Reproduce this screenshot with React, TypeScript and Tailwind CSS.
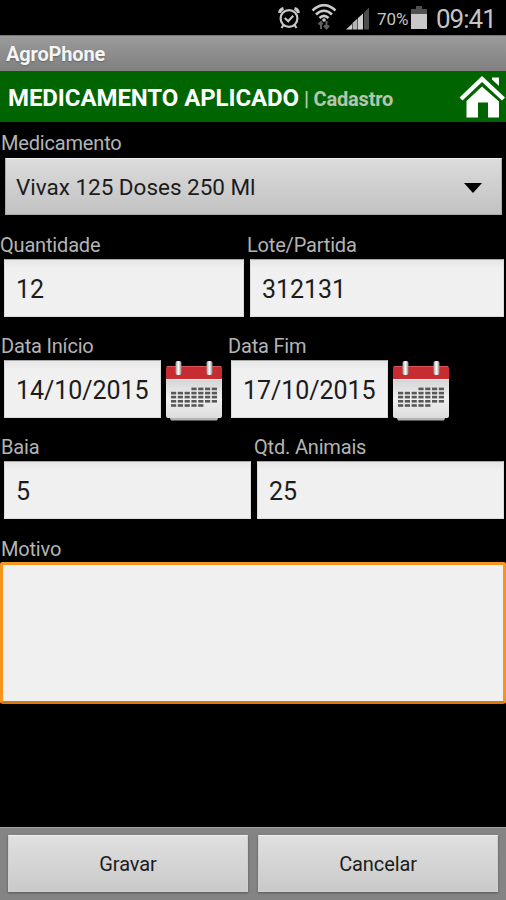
import React from "react";

function Label({ children, className = "" }: { children: React.ReactNode; className?: string }) {
  return (
    <div className={`whitespace-nowrap text-[20px] leading-6 tracking-[-0.18px] text-[#b4b4b4] ${className}`}>
      {children}
    </div>
  );
}

function Field({ value, className = "" }: { value: string; className?: string }) {
  return (
    <div
      className={`flex h-[58px] items-center whitespace-nowrap border border-[#dcdcdc] border-t-[#a8a8a8] bg-gradient-to-b from-[#e6e6e6] to-[#f0f0f0] to-15% pl-[11px] pt-1 text-[25px] tracking-[-0.05px] text-[#1c1c1c] ${className}`}
    >
      {value}
    </div>
  );
}

const calendarRows = [
  { y: 27.6, from: 3, to: 6 },
  { y: 31.8, from: 0, to: 6 },
  { y: 35.8, from: 0, to: 6 },
  { y: 40, from: 0, to: 6 },
  { y: 44.2, from: 0, to: 4 },
];

function Calendar() {
  return (
    <svg width="58" height="62" viewBox="0 0 58 62" className="block shrink-0">
      <defs>
        <linearGradient id="sheet" x1="0" y1="0" x2="0" y2="1">
          <stop offset="0" stopColor="#d2d2d5" />
          <stop offset="0.5" stopColor="#f0f0f0" />
          <stop offset="1" stopColor="#dddddd" />
        </linearGradient>
        <linearGradient id="ring" x1="0" y1="0" x2="1" y2="0">
          <stop offset="0" stopColor="#999" />
          <stop offset="0.5" stopColor="#fff" />
          <stop offset="1" stopColor="#888" />
        </linearGradient>
      </defs>
      <path d="M4 56h50l-2 4.500H6z" fill="#b4b4b4" />
      <path d="M1 18h56v38q0 2-2 2H3q-2 0-2-2z" fill="url(#sheet)" />
      <path d="M1 19V8q0-2 2-2h52q2 0 2 2v11z" fill="#c62c30" />
      <path d="M2 6.500h54" stroke="#d8585a" strokeWidth="1" />
      <path d="M1 19.500h56" stroke="#efefef" strokeWidth="1" />
      <rect x="10.5" y="1" width="6" height="14" rx="2" fill="url(#ring)" />
      <rect x="41.500" y="1" width="6" height="14" rx="2" fill="url(#ring)" />
      {calendarRows.map((row, r) =>
        [0, 1, 2, 3, 4, 5, 6]
          .filter((c) => c >= row.from && c <= row.to)
          .map((c) => (
            <rect key={`${r}-${c}`} x={6 + c * 6.8} y={row.y} width="5.2" height="2.6" fill="#585858" />
          )),
      )}
    </svg>
  );
}

function StatusBar() {
  return (
    <div className="flex h-[35px] items-start text-[#c4c4c4]">
      <svg width="24" height="24" viewBox="0 0 24 24" fill="none" stroke="#c8c8c8" className="ml-[277px] mt-1.5">
        <circle cx="12" cy="12.5" r="8.400" strokeWidth="2.200" />
        <path d="M7.800 12l3.400 3.200 5-5.400" strokeWidth="2.200" />
        <path d="M2.500 7Q3 3.500 6.500 2.500M21.500 7Q21 3.500 17.500 2.500" strokeWidth="3" />
        <path d="M6.500 19l-2 3M17.500 19l2 3" strokeWidth="2.200" />
      </svg>
      <svg width="26" height="28" viewBox="0 0 26 28" fill="none" className="ml-[10px] mt-1">
        <path d="M1.500 6.500Q13-4 24.500 6.500M5 10.500Q13 3 21 10.500M8.500 14Q13 9.500 17.500 14" stroke="#cacaca" strokeWidth="2.600" />
        <circle cx="13" cy="16" r="1.800" fill="#c4c4c4" />
        <path d="M10 25v-7M7.500 20.500L10 18l1.500 2.500M15.500 17v7M13 21.500l2.500 3 2.500-3" stroke="#606060" strokeWidth="2" />
      </svg>
      <svg width="24" height="24" viewBox="0 0 24 24" className="ml-[9px] mt-1.5">
        <path d="M0 23.500L6 18v5.500z" fill="#cfcfcf" />
        <path d="M6.500 23.500V17l5-4.500v11z" fill="#b4b4b4" />
        <path d="M12 23.500V12l5-4.500v16z" fill="#cfcfcf" />
        <path d="M18 23.500V6.500l5-5v22z" fill="#4d4d4d" />
      </svg>
      <span className="ml-[7px] mt-[7px] w-[34px] whitespace-nowrap text-[17px] leading-6 tracking-[-0.1px]">70%</span>
      <svg width="16" height="24" viewBox="0 0 16 24" className="mt-1.5 shrink-0">
        <path d="M5 0h6v3h5v6H0V3h5z" fill="#505050" />
        <path d="M0 8h16v15H0z" fill="#c8c8c8" />
      </svg>
      <span className="ml-[9px] mt-[4px] whitespace-nowrap text-[26px] leading-[30px] tracking-[-1px]">09:41</span>
    </div>
  );
}

function ActionButton({ children }: { children: React.ReactNode }) {
  return (
    <div className="flex h-[57px] flex-1 items-center justify-center border border-[#d0d0d0] border-t-[#f0f0f0] bg-gradient-to-b from-[#e0e0e0] to-[#c9c9c9] text-[20px] tracking-[-0.1px] text-[#1c1c1c] shadow-[0_1px_2px_#555]">
      {children}
    </div>
  );
}

export default function App() {
  return (
    <div className="flex h-[900px] w-[506px] flex-col overflow-hidden bg-black font-[Roboto,sans-serif]">
      <StatusBar />
      <div className="flex h-9 items-center border-t border-[#777] bg-gradient-to-b from-[#9b9b9b] to-[#808080] pl-1.5 text-[20px] font-bold tracking-[-0.15px] text-[#f5f5f5] [text-shadow:0_1px_2px_#666]">
        AgroPhone
      </div>
      <div className="flex h-[51px] items-center bg-[#006400] pl-2">
        <span className="mt-0.5 w-[296px] whitespace-nowrap text-[24px] font-bold tracking-[-0.08px] text-white">MEDICAMENTO APLICADO</span>
        <span className="mt-1 whitespace-nowrap text-[20px] font-bold tracking-[-0.2px] text-[#b5c5b0]">| Cadastro</span>
        <svg width="47" height="44" viewBox="0 0 47 44" fill="#fff" className="ml-auto mt-0.5">
          <path d="M0.500 21.500L23 0 46 21.500l-3 3L23 6 3.500 24.500z" />
          <path d="M33 1.500h7v8.500l-7-6.500z" />
          <path d="M7.500 25L23 10.500 40 25.500V41.500H29V26.500H19V41.500H7.500z" />
        </svg>
      </div>
      <Label className="mt-[9px] pl-px">Medicamento</Label>
      <div className="ml-[5px] mt-[3px] flex h-[57px] w-[497px] items-center justify-between border border-[#aaa] border-t-[#eee] bg-gradient-to-b from-[#dcdcdc] to-[#c2c2c2] pl-[10px] pr-[19px] pt-[2px] text-[22.5px] tracking-[-0.02px] text-[#1c1c1c]">
        <span>Vivax 125 Doses 250 Ml</span>
        <svg width="18" height="10" viewBox="0 0 18 10"><path d="M0 0h18L9 10z" fill="#000" /></svg>
      </div>
      <div className="mt-[18px] flex">
        <Label className="w-[247px]">Quantidade</Label>
        <Label>Lote/Partida</Label>
      </div>
      <div className="mt-[2px] flex gap-[6px] pl-1">
        <Field value="12" className="w-[240px]" />
        <Field value="312131" className="w-[254px]" />
      </div>
      <div className="mt-[17px] flex">
        <Label className="w-[228px] pl-px">Data Início</Label>
        <Label>Data Fim</Label>
      </div>
      <div className="mt-[2px] flex h-[61px] pl-1">
        <Field value="14/10/2015" className="w-[157px]" />
        <div className="ml-1 mr-2"><Calendar /></div>
        <Field value="17/10/2015" className="w-[157px]" />
        <div className="ml-1"><Calendar /></div>
      </div>
      <div className="mt-[14px] flex">
        <Label className="w-[254px] pl-px">Baia</Label>
        <Label>Qtd. Animais</Label>
      </div>
      <div className="mt-[2px] flex gap-[6px] pl-1">
        <Field value="5" className="w-[247px]" />
        <Field value="25" className="w-[247px]" />
      </div>
      <Label className="mt-[18px] pl-px">Motivo</Label>
      <div className="mt-px h-[142px] rounded-[3px] border-[3px] border-x-[#f7941d] border-b-[#dc7810] border-t-[#f7941d] bg-[#f0f0f0]" />
      <div className="mt-auto flex h-[73px] gap-[10px] border-t border-[#a0a0a0] bg-[#848484] px-2 pt-[7px]">
        <ActionButton>Gravar</ActionButton>
        <ActionButton>Cancelar</ActionButton>
      </div>
    </div>
  );
}
